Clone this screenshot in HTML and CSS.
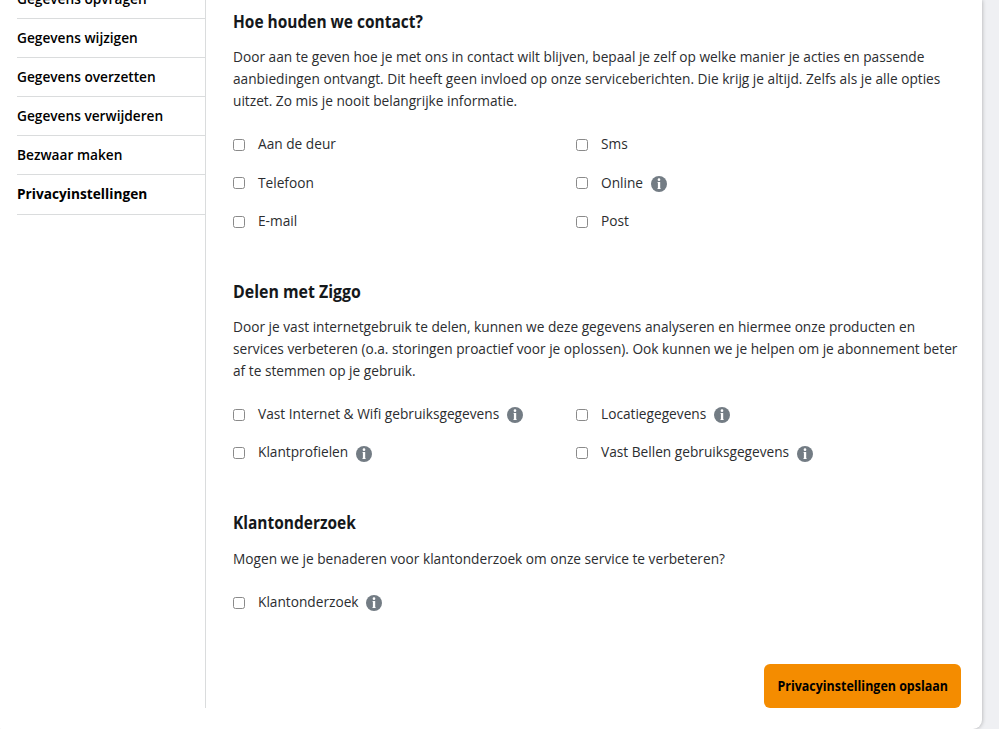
FILE: index.html
```
<!DOCTYPE html>
<html lang="nl">
<head>
  <meta charset="UTF-8">
  <meta name="viewport" content="width=device-width, initial-scale=1">
  <title>Privacyinstellingen</title>
  <link rel="stylesheet" href="styles.css">
</head>
<body>
  <svg class="sprite" width="0" height="0">
    <symbol id="info" viewBox="0 0 16 16">
      <circle cx="8" cy="8" r="8" fill="#737c84"/>
      <circle cx="8" cy="3.7" r="1.35" fill="#fff"/>
      <path d="M6.5 5.9h2.7v6.3h.5v.8H6.4v-.8h.5V6.7h-.4z" fill="#fff"/>
    </symbol>
  </svg>
  <div class="card">
    <nav class="sidebar">
      <a href="#">Gegevens opvragen</a>
      <a href="#">Gegevens wijzigen</a>
      <a href="#">Gegevens overzetten</a>
      <a href="#">Gegevens verwijderen</a>
      <a href="#">Bezwaar maken</a>
      <a href="#" class="active">Privacyinstellingen</a>
    </nav>

    <form class="content">
      <section>
        <h2>Hoe houden we contact?</h2>
        <p>Door aan te geven hoe je met ons in contact wilt blijven, bepaal je zelf op welke manier je acties en passende<br>
          aanbiedingen ontvangt. Dit heeft geen invloed op onze serviceberichten. Die krijg je altijd. Zelfs als je alle opties<br>
          uitzet. Zo mis je nooit belangrijke informatie.</p>
        <div class="options">
          <label><input type="checkbox">Aan de deur</label>
          <label><input type="checkbox">Sms</label>
          <label><input type="checkbox">Telefoon</label>
          <label><input type="checkbox">Online <svg class="info"><use href="#info"/></svg></label>
          <label><input type="checkbox">E-mail</label>
          <label><input type="checkbox">Post</label>
        </div>
      </section>

      <section>
        <h2 class="wide">Delen met Ziggo</h2>
        <p>Door je vast internetgebruik te delen, kunnen we deze gegevens analyseren en hiermee onze producten en<br>
          services verbeteren (o.a. storingen proactief voor je oplossen). Ook kunnen we je helpen om je abonnement beter<br>
          af te stemmen op je gebruik.</p>
        <div class="options">
          <label><input type="checkbox">Vast Internet &amp; Wifi gebruiksgegevens <svg class="info"><use href="#info"/></svg></label>
          <label><input type="checkbox">Locatiegegevens <svg class="info"><use href="#info"/></svg></label>
          <label><input type="checkbox">Klantprofielen <svg class="info"><use href="#info"/></svg></label>
          <label><input type="checkbox">Vast Bellen gebruiksgegevens <svg class="info"><use href="#info"/></svg></label>
        </div>
      </section>

      <section>
        <h2>Klantonderzoek</h2>
        <p>Mogen we je benaderen voor klantonderzoek om onze service te verbeteren?</p>
        <div class="options">
          <label><input type="checkbox">Klantonderzoek <svg class="info"><use href="#info"/></svg></label>
        </div>
      </section>

      <div class="actions">
        <button type="button"><span>Privacyinstellingen opslaan</span></button>
      </div>
    </form>
  </div>
</body>
</html>
```
FILE: styles.css
```
* {
  box-sizing: border-box;
}
body {
  margin: 0;
  height: 729px;
  overflow: hidden;
  background: #eff0f3;
  font-family: "Open Sans", "Noto Sans", sans-serif;
  font-size: 13.7px;
  line-height: 21.75px;
  color: #2b2d2f;
}
.sprite {
  display: block;
}
.card {
  display: flex;
  width: 989px;
  height: 729px;
  margin-left: -7px;
  padding: 0 21px 21px 24px;
  background: #fff;
  border-radius: 0 0 9px 9px;
  box-shadow: 0 0 4px rgba(0, 0, 0, 0.3);
}
.sidebar {
  flex: 0 0 188px;
  margin-top: -20.5px;
}
.sidebar a {
  display: block;
  height: 39.2px;
  border-bottom: 1px solid #dadcdd;
  line-height: 38px;
  font-weight: 600;
  color: #000;
  text-decoration: none;
}
.sidebar .active {
  font-weight: 700;
}
.content {
  flex: 1;
  display: flex;
  flex-direction: column;
  border-left: 1px solid #dadcdd;
  padding: 8.6px 0 0 27px;
}
section {
  margin-bottom: 38.4px;
}
h2 {
  margin: 0 0 11.8px;
  font-size: 17px;
  line-height: 26px;
  font-weight: 700;
  color: #15181b;
  transform: scaleX(0.91);
  transform-origin: left;
}
h2.wide {
  transform: scaleX(0.935);
}
p {
  margin: 0 0 13px;
  white-space: nowrap;
}
.options {
  display: grid;
  grid-template-columns: 343px 1fr;
  grid-auto-rows: 38.5px;
}
label {
  display: flex;
  align-items: center;
}
input {
  appearance: none;
  width: 12px;
  height: 12px;
  margin: 2px 13px 0 0;
  border: 1px solid #8a8a8a;
  border-radius: 2.5px;
  background: #fff;
}
.info {
  width: 16px;
  height: 16px;
  margin: 3px 0 0 7.5px;
}
.actions {
  margin-top: auto;
  text-align: right;
}
button {
  width: 197px;
  height: 44px;
  padding: 0 0 1px;
  border: 0;
  border-radius: 6px;
  background: #f48c00;
  font: 700 13.7px "Open Sans", sans-serif;
  color: #000;
  vertical-align: top;
}
button span {
  display: inline-block;
  transform: scaleX(0.91);
  margin: 0 -10px;
}
```
